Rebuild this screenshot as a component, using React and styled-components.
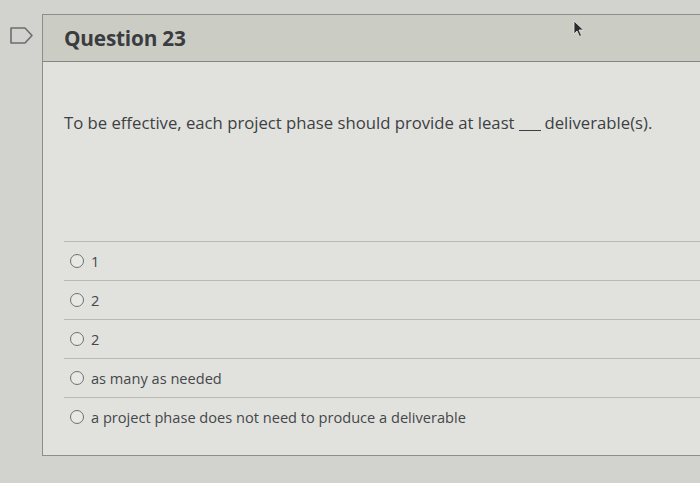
import React from "react";
import styled, { createGlobalStyle } from "styled-components";

const Global = createGlobalStyle`
  html, body { margin: 0; padding: 0; }
  body {
    width: 700px; height: 483px; overflow: hidden;
    background: #d2d2ce;
    font-family: "Open Sans", "Liberation Sans", sans-serif;
  }
`;

const Page = styled.div`
  position: relative;
  display: flex;
  align-items: flex-start;
  width: 700px;
  height: 483px;
  padding-top: 14px;
  box-sizing: border-box;
`;

const Gutter = styled.div`
  width: 42px;
  flex: none;
  display: flex;
  justify-content: flex-start;
  padding: 13px 0 0 10px;
  box-sizing: border-box;
`;

const Panel = styled.div`
  flex: 1;
  margin-right: -20px;
  border: 1px solid #8d8e89;
  border-right: none;
  background: #e1e2dd;
  height: 442px;
  box-sizing: border-box;
`;

const Header = styled.div`
  height: 47px;
  display: flex;
  align-items: center;
  padding-left: 21px;
  background: #cbcdc5;
  border-bottom: 1px solid #85867f;
  box-sizing: border-box;
`;

const Title = styled.h2`
  margin: 0;
  font-size: 20.8px;
  font-weight: 700;
  color: #3a3c40;
  letter-spacing: -0.2px;
`;

const Body = styled.div`
  padding: 0 0 0 21px;
`;

const Prompt = styled.p`
  margin: 50px 0 0;
  font-size: 16.7px;
  line-height: 22px;
  color: #3d3f44;
`;

const Blank = styled.span`
  display: inline-block;
  width: 22px;
  border-bottom: 1px solid #3d3f44;
  margin: 0 4px 0 4px;
  vertical-align: -2px;
`;

const Answers = styled.ul`
  list-style: none;
  margin: 107px 0 0;
  padding: 0;
`;

const Answer = styled.li`
  height: 39px;
  display: flex;
  align-items: center;
  gap: 7px;
  padding-left: 6px;
  border-top: 1px solid #b9bab4;
  box-sizing: border-box;
  font-size: 14.6px;
  color: #45474b;
`;

const Radio = styled.span`
  width: 12px;
  height: 12px;
  border: 1px solid #6e7074;
  border-radius: 50%;
  background: #e8e9e5;
  flex: none;
`;

const Cursor = styled.svg`
  position: absolute;
  left: 573px;
  top: 20px;
`;

const answers = ["1", "2", "2", "as many as needed", "a project phase does not need to produce a deliverable"];

export default function App() {
  return (
    <>
      <Global />
      <Page>
        <Gutter>
          <svg width="24" height="17" viewBox="0 0 24 17">
            <path d="M1 1 H15 L22 8.5 L15 16 H1 Z" fill="none" stroke="#6c6d70" strokeWidth="1.6" strokeLinejoin="round" />
          </svg>
        </Gutter>
        <Panel>
          <Header>
            <Title>Question 23</Title>
          </Header>
          <Body>
            <Prompt>
              To be effective, each project phase should provide at least<Blank />deliverable(s).
            </Prompt>
            <Answers>
              {answers.map((a, i) => (
                <Answer key={i}>
                  <Radio />
                  {a}
                </Answer>
              ))}
            </Answers>
          </Body>
        </Panel>
        <Cursor width="12" height="18" viewBox="0 0 12 18">
          <path d="M1 1 L1 14 L4 11 L6.5 16.5 L8.5 15.5 L6 10 L10.5 10 Z" fill="#2b2c30" stroke="#e8e8e4" strokeWidth="0.8" />
        </Cursor>
      </Page>
    </>
  );
}
